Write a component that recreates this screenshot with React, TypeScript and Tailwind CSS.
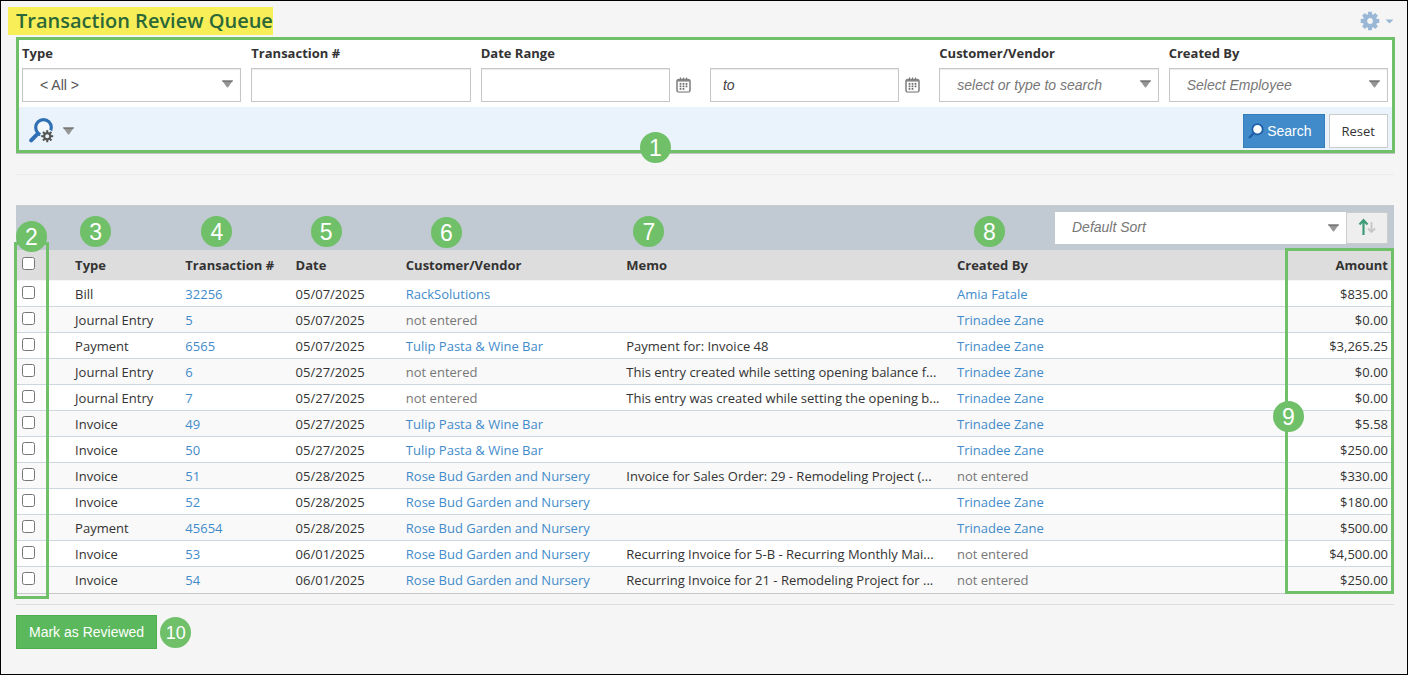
import React from 'react';
import clsx from 'clsx';

type Row = {
  type: string;
  number: string;
  date: string;
  party: string;
  memo: string;
  createdBy: string;
  amount: string;
};

const ROWS: Row[] = [
  { type: 'Bill', number: '32256', date: '05/07/2025', party: 'RackSolutions', memo: '', createdBy: 'Amia Fatale', amount: '$835.00' },
  { type: 'Journal Entry', number: '5', date: '05/07/2025', party: '', memo: '', createdBy: 'Trinadee Zane', amount: '$0.00' },
  { type: 'Payment', number: '6565', date: '05/07/2025', party: 'Tulip Pasta & Wine Bar', memo: 'Payment for: Invoice 48', createdBy: 'Trinadee Zane', amount: '$3,265.25' },
  { type: 'Journal Entry', number: '6', date: '05/27/2025', party: '', memo: 'This entry created while setting opening balance f...', createdBy: 'Trinadee Zane', amount: '$0.00' },
  { type: 'Journal Entry', number: '7', date: '05/27/2025', party: '', memo: 'This entry was created while setting the opening b...', createdBy: 'Trinadee Zane', amount: '$0.00' },
  { type: 'Invoice', number: '49', date: '05/27/2025', party: 'Tulip Pasta & Wine Bar', memo: '', createdBy: 'Trinadee Zane', amount: '$5.58' },
  { type: 'Invoice', number: '50', date: '05/27/2025', party: 'Tulip Pasta & Wine Bar', memo: '', createdBy: 'Trinadee Zane', amount: '$250.00' },
  { type: 'Invoice', number: '51', date: '05/28/2025', party: 'Rose Bud Garden and Nursery', memo: 'Invoice for Sales Order: 29 - Remodeling Project (...', createdBy: '', amount: '$330.00' },
  { type: 'Invoice', number: '52', date: '05/28/2025', party: 'Rose Bud Garden and Nursery', memo: '', createdBy: 'Trinadee Zane', amount: '$180.00' },
  { type: 'Payment', number: '45654', date: '05/28/2025', party: 'Rose Bud Garden and Nursery', memo: '', createdBy: 'Trinadee Zane', amount: '$500.00' },
  { type: 'Invoice', number: '53', date: '06/01/2025', party: 'Rose Bud Garden and Nursery', memo: 'Recurring Invoice for 5-B - Recurring Monthly Mai...', createdBy: '', amount: '$4,500.00' },
  { type: 'Invoice', number: '54', date: '06/01/2025', party: 'Rose Bud Garden and Nursery', memo: 'Recurring Invoice for 21 - Remodeling Project for ...', createdBy: '', amount: '$250.00' },
];

const TEETH = [0, 45, 90, 135, 180, 225, 270, 315];

const control =
  "w-full h-[34px] bg-white border border-[#c6c6c6] rounded-none appearance-none outline-none font-['Liberation_Sans',sans-serif] text-sm shadow-[inset_0_1px_1px_rgba(0,0,0,0.08)]";

const Badge: React.FC<{ n: number; className: string }> = ({ n, className }) => (
  <span
    className={clsx(
      "absolute z-20 flex items-center justify-center w-[31px] h-[31px] rounded-full bg-[#6fc069] text-white font-normal font-['Liberation_Sans',sans-serif]",
      n > 9 ? 'text-lg' : 'text-[23px]',
      className
    )}
  >
    {n}
  </span>
);

const Triangle: React.FC<{ className?: string }> = ({ className }) => (
  <svg className={className} width="11" height="8" viewBox="0 0 11 8">
    <path d="M0 0.5H11L5.9 7.5H5.1Z" fill="#959595" />
    <path d="M0 0.5H11L10.3 1.7H0.7Z" fill="#6e6e6e" />
  </svg>
);

const CalendarIcon: React.FC = () => (
  <svg width="15" height="16" viewBox="0 0 15 16">
    <rect x="1" y="2.5" width="13" height="12.5" rx="2" fill="#fff" stroke="#858585" strokeWidth="1.6" />
    <path d="M1.2 3.6H13.8" stroke="#858585" strokeWidth="2" />
    <path d="M4.5 0.5V3M7.5 0.5V3M10.5 0.5V3" stroke="#777" strokeWidth="1.2" />
    <path d="M4.5 6V13.5M7.5 6V13.5M10.5 6V11" stroke="#6b6b6b" strokeWidth="1.7" strokeDasharray="1.7 0.8" />
    <path d="M2 14.7H13" stroke="#bdbdbd" strokeWidth="1.6" />
  </svg>
);

const GearIcon: React.FC = () => (
  <svg width="20" height="20" viewBox="0 0 20 20">
    <circle cx="10" cy="10" r="5" fill="none" stroke="#9ab8d5" strokeWidth="4.2" />
    {TEETH.map((a) => (
      <path key={a} d="M7.8 4L8.1 0.7H11.9L12.2 4Z" fill="#9ab8d5" transform={`rotate(${a} 10 10)`} />
    ))}
  </svg>
);

const AdvancedSearchIcon: React.FC = () => (
  <svg width="26" height="26" viewBox="0 0 26 26">
    <path d="M8.8 15.6L2.2 22.4" stroke="#2f6fb3" strokeWidth="4" strokeLinecap="round" />
    <circle cx="14.5" cy="9.5" r="7.8" fill="#f4f8fd" stroke="#2f6fb3" strokeWidth="3.2" />
    <circle cx="18.2" cy="18.2" r="7" fill="#eaf2fb" />
    <circle cx="18.2" cy="18.2" r="3.1" fill="none" stroke="#555" strokeWidth="2.2" />
    {TEETH.map((a) => (
      <rect key={a} x="17.2" y="12.2" width="2" height="2.6" fill="#555" transform={`rotate(${a} 18.2 18.2)`} />
    ))}
  </svg>
);

const SearchIcon: React.FC = () => (
  <svg width="16" height="16" viewBox="0 0 16 16">
    <path d="M5.5 10.5L1 15" stroke="#1f5fa8" strokeWidth="2.4" />
    <circle cx="9.5" cy="6.3" r="5.2" fill="#fff" stroke="#1f5fa8" strokeWidth="1.8" />
  </svg>
);

const SortIcon: React.FC = () => (
  <svg width="18" height="18" viewBox="0 0 18 18" fill="none">
    <path d="M5.5 17V2.5M1.5 6.5L5.5 2.2L9.5 6.5" stroke="#3f9c78" strokeWidth="2.2" />
    <path d="M13.5 4V14M10 10.5L13.5 14L17 10.5" stroke="#c6c6c6" strokeWidth="1.8" />
  </svg>
);

const Field: React.FC<{ id: string; label?: string; children: React.ReactNode }> = ({ id, label, children }) => (
  <div className="min-w-0">
    <label htmlFor={id} className="block h-7 leading-[26px] font-bold text-[#333]">
      {label}
    </label>
    {children}
  </div>
);

const Linked: React.FC<{ text: string }> = ({ text }) =>
  text ? (
    <a href="#" className="text-[#428bca]">
      {text}
    </a>
  ) : (
    <span className="text-[#777]">not entered</span>
  );

const FilterPanel: React.FC = () => (
  <form className="relative mt-0.5 -mr-px border-[3px] border-[#6fc069] bg-white shadow-[0_1px_0_#c4c4c4]">
    <div className="grid grid-cols-6 gap-[10px] pl-[3px] pr-1 pb-[5px]">
      <Field id="type" label="Type">
        <div className="relative">
          <select id="type" className={clsx(control, 'pl-[17px] text-[#555]')}>
            <option>&lt; All &gt;</option>
          </select>
          <Triangle className="absolute right-2 top-3 pointer-events-none" />
        </div>
      </Field>
      <Field id="number" label="Transaction #">
        <input id="number" className={clsx(control, 'px-3')} />
      </Field>
      <Field id="from" label="Date Range">
        <div className="flex items-center">
          <input id="from" className={clsx(control, 'px-3')} />
          <button type="button" aria-label="Pick start date" className="shrink-0 w-[30px] pl-1.5">
            <CalendarIcon />
          </button>
        </div>
      </Field>
      <Field id="to">
        <div className="flex items-center">
          <input id="to" aria-label="to" placeholder="to" className={clsx(control, 'px-3 italic placeholder:text-[#444]')} />
          <button type="button" aria-label="Pick end date" className="shrink-0 w-[30px] pl-1.5">
            <CalendarIcon />
          </button>
        </div>
      </Field>
      <Field id="party" label="Customer/Vendor">
        <div className="relative">
          <input
            id="party"
            placeholder="select or type to search"
            className={clsx(control, 'pl-[17px] pr-6 italic placeholder:text-[#777]')}
          />
          <Triangle className="absolute right-2 top-3 pointer-events-none" />
        </div>
      </Field>
      <Field id="employee" label="Created By">
        <div className="relative">
          <select id="employee" className={clsx(control, 'pl-[17px] italic text-[#777]')}>
            <option>Select Employee</option>
          </select>
          <Triangle className="absolute right-2 top-3 pointer-events-none" />
        </div>
      </Field>
    </div>
    <div className="flex items-start justify-between bg-[#eaf2fb] pt-[7px] pb-0.5 pl-[10px] pr-1">
      <button type="button" aria-label="Advanced search" className="flex items-center gap-2 pt-1">
        <AdvancedSearchIcon />
        <Triangle />
      </button>
      <div className="flex gap-1">
        <button
          type="button"
          className="flex items-center gap-[3px] h-[34px] pl-1 pr-3 border border-[#357ebd] bg-[#428bca] font-['Liberation_Sans',sans-serif] text-sm text-white"
        >
          <SearchIcon />
          Search
        </button>
        <button type="reset" className="h-[34px] px-3 border border-[#ccc] bg-white text-[#333]">
          Reset
        </button>
      </div>
    </div>
    <Badge n={1} className="left-[621px] -bottom-[13px]" />
  </form>
);

const TransactionTable: React.FC = () => (
  <section className="relative mt-[30px]">
    <div className="flex justify-end h-[45px] pt-1.5 pr-1.5 bg-[#c1c9d3] border-t border-[#c8cacc]">
      <div className="relative w-[292px]">
        <select
          aria-label="Sort"
          className="w-full h-8 pl-[17px] pb-0.5 bg-white border-r border-[#ccc] rounded-none appearance-none outline-none font-['Liberation_Sans',sans-serif] text-sm italic text-[#777]"
        >
          <option>Default Sort</option>
        </select>
        <Triangle className="absolute right-2 top-3 pointer-events-none" />
      </div>
      <button type="button" aria-label="Sort direction" className="flex justify-center w-[41px] h-8 pt-[5px] bg-[#eee] border border-l-0 border-[#ccc]">
        <SortIcon />
      </button>
    </div>
    <table className="w-full table-fixed border-separate border-spacing-0 text-[#333]">
      <colgroup>
        <col className="w-[4%]" />
        <col className="w-[8%]" />
        <col className="w-[8%]" />
        <col className="w-[8%]" />
        <col className="w-[16%]" />
        <col className="w-[24%]" />
        <col className="w-[24%]" />
        <col className="w-[8%]" />
      </colgroup>
      <thead>
        <tr className="h-[31px] bg-[#ddd] text-left whitespace-nowrap *:border-b *:border-[#f5f5f5]">
          <th className="pl-1.5 pb-[3px]">
            <input type="checkbox" aria-label="Select all" className="block w-[13px] h-[13px]" />
          </th>
          <th className="relative px-1">
            Type
            <Badge n={3} className="left-[9px] -top-[34px]" />
          </th>
          <th className="relative px-1">
            Transaction #
            <Badge n={4} className="left-5 -top-[34px]" />
          </th>
          <th className="relative px-1">
            Date
            <Badge n={5} className="left-[19px] -top-[34px]" />
          </th>
          <th className="relative px-1">
            Customer/Vendor
            <Badge n={6} className="left-[29px] -top-[33px]" />
          </th>
          <th className="relative px-1">
            Memo
            <Badge n={7} className="left-[11px] -top-[34px]" />
          </th>
          <th className="relative px-1">
            Created By
            <Badge n={8} className="left-[21px] -top-[34px]" />
          </th>
          <th className="pr-1.5 text-right">Amount</th>
        </tr>
      </thead>
      <tbody>
        {ROWS.map((row) => (
          <tr
            key={row.number}
            className="h-[26px] last:h-[27px] bg-white even:bg-[#f9f9f9] align-top whitespace-nowrap *:pt-[3px] *:border-b *:border-[#cdd7e0] last:*:border-[#c8c8c8]"
          >
            <td className="pl-1.5">
              <input type="checkbox" aria-label={`Select ${row.number}`} className="block mt-0.5 w-[13px] h-[13px]" />
            </td>
            <td className="px-1">{row.type}</td>
            <td className="px-1">
              <Linked text={row.number} />
            </td>
            <td className="px-1">{row.date}</td>
            <td className="px-1">
              <Linked text={row.party} />
            </td>
            <td className="px-1">{row.memo}</td>
            <td className="px-1">
              <Linked text={row.createdBy} />
            </td>
            <td className="pr-1.5 text-right">{row.amount}</td>
          </tr>
        ))}
      </tbody>
    </table>
    {/* outlines around the checkbox and amount columns */}
    <div className="absolute z-10 -left-0.5 top-[37px] -bottom-[5px] w-[35px] border-[3px] border-[#6fc069] pointer-events-none" />
    <div className="absolute z-10 right-0 top-[43px] bottom-0 w-[109px] border-[3px] border-[#6fc069] pointer-events-none" />
    <Badge n={2} className="left-0 top-4" />
    <Badge n={9} className="right-[90px] top-[196px]" />
  </section>
);

export default function App() {
  return (
    <main className="min-h-screen border border-black bg-[#f5f5f5] pt-1.5 pl-[15px] pr-[13px] pb-6 font-['Open_Sans','Noto_Sans',sans-serif] text-[13px] leading-5">
      <header className="flex items-center justify-between">
        <h1 className="-ml-2 h-7 pl-2 bg-[#f8ee58] text-xl leading-7 font-semibold text-[#2b6838] whitespace-nowrap">
          Transaction Review Queue
        </h1>
        <button type="button" aria-label="Settings" className="flex items-center gap-[5px]">
          <GearIcon />
          <svg width="9" height="5" viewBox="0 0 9 5">
            <path d="M0.5 0.5H8.5L4.5 4.5Z" fill="#9ab8d5" />
          </svg>
        </button>
      </header>
      <FilterPanel />
      <hr className="mt-[21px] border-[#ebebeb]" />
      <TransactionTable />
      <hr className="mt-[10px] border-[#dcdcdc]" />
      <div className="flex items-center pt-[10px]">
        <div className="relative">
          <button
            type="button"
            className="h-[34px] px-3 border border-[#4cae4c] bg-[#5cb85c] font-['Liberation_Sans',sans-serif] text-sm text-white"
          >
            Mark as Reviewed
          </button>
          <Badge n={10} className="left-full ml-[3px] top-0.5" />
        </div>
      </div>
    </main>
  );
}
